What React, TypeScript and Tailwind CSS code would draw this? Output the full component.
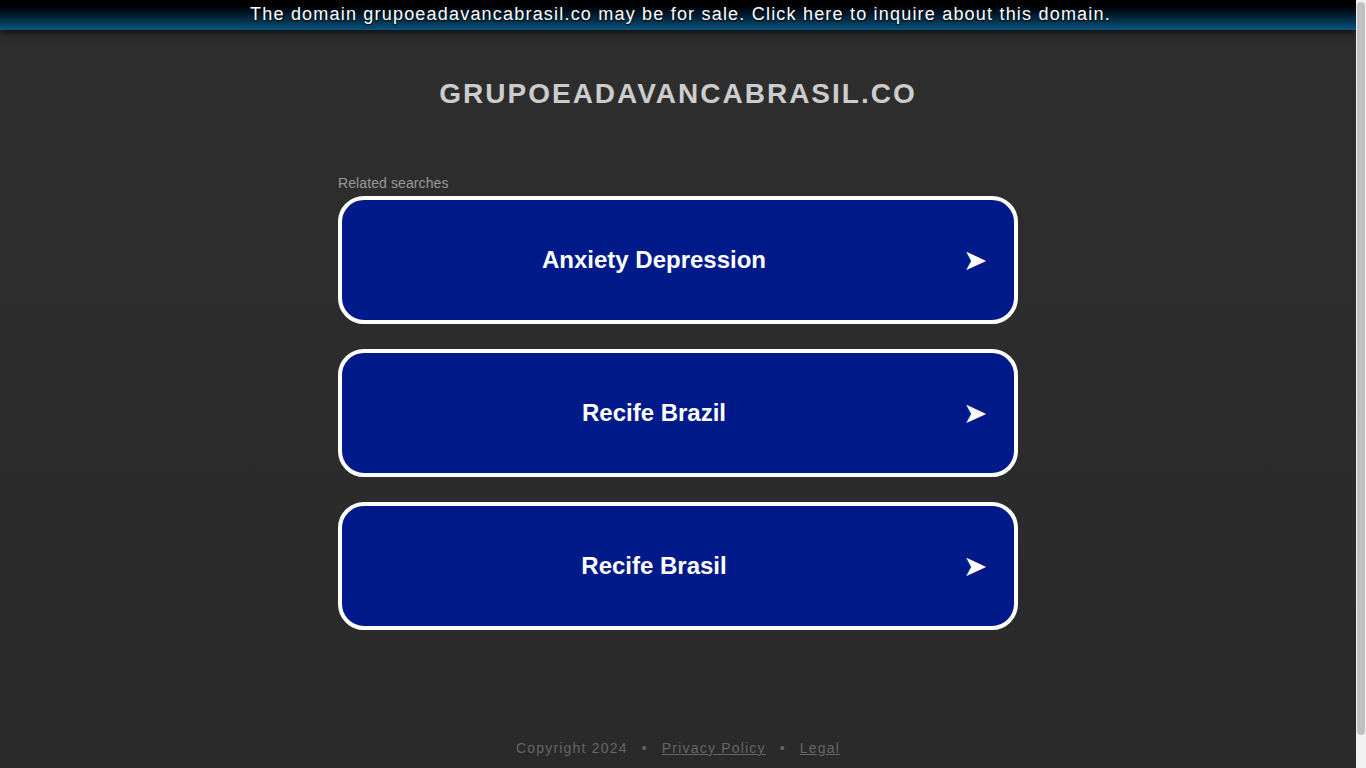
import React from "react";

const searches = ["Anxiety Depression", "Recife Brazil", "Recife Brasil"];

function SearchCard({ label }: { label: string }) {
  return (
    <a
      href="#"
      className="flex h-[128px] items-center rounded-[26px] border-4 border-white bg-[#011a8a] text-white"
    >
      <span className="flex-1 text-center text-[24px] font-bold">{label}</span>
      <span className="w-12 text-[29px] leading-none -indent-[3px] font-['DejaVu_Sans',sans-serif]">
        ➤
      </span>
    </a>
  );
}

export default function App() {
  return (
    <div className="flex h-screen overflow-hidden bg-[#2b2b2b] font-['Liberation_Sans',Arial,sans-serif]">
      <div className="flex min-w-0 flex-1 flex-col bg-gradient-to-b from-[#2e2e2e] to-[#2a2a2a]">
        <div className="flex h-[30px] shrink-0 items-center justify-center bg-gradient-to-b from-[#000000] to-[#0a5580] pb-[2px] pl-[5px] text-[18px] tracking-[1.2px] text-white shadow-[0_3px_8px_rgba(0,0,0,0.7)] [text-shadow:0_1px_2px_#000]">
          The domain grupoeadavancabrasil.co may be for sale. Click here to inquire about this domain.
        </div>

        <h1 className="mt-[43px] text-center text-[28px] font-bold tracking-[2px] text-[#cccccc]">
          GRUPOEADAVANCABRASIL.CO
        </h1>

        <div className="mx-auto mt-[58px] w-[680px]">
          <p className="text-[14px] tracking-[0.1px] text-[#999999]">Related searches</p>
          <div className="mt-[2px] flex flex-col gap-[25px]">
            {searches.map((s) => (
              <SearchCard key={s} label={s} />
            ))}
          </div>
        </div>

        <footer className="mt-[108px] text-center text-[14px] tracking-[1.2px] text-[#666666]">
          <span>Copyright 2024</span>
          <span className="mx-[14px]">•</span>
          <a href="#" className="underline">
            Privacy Policy
          </a>
          <span className="mx-[14px]">•</span>
          <a href="#" className="underline">
            Legal
          </a>
        </footer>
      </div>

      {/* page scrollbar */}
      <div className="w-[10px] shrink-0 bg-[#f1f1f1] px-[1px] pt-[2px]">
        <div className="h-[733px] rounded-[4px] bg-[#c1c1c1]" />
      </div>
    </div>
  );
}
